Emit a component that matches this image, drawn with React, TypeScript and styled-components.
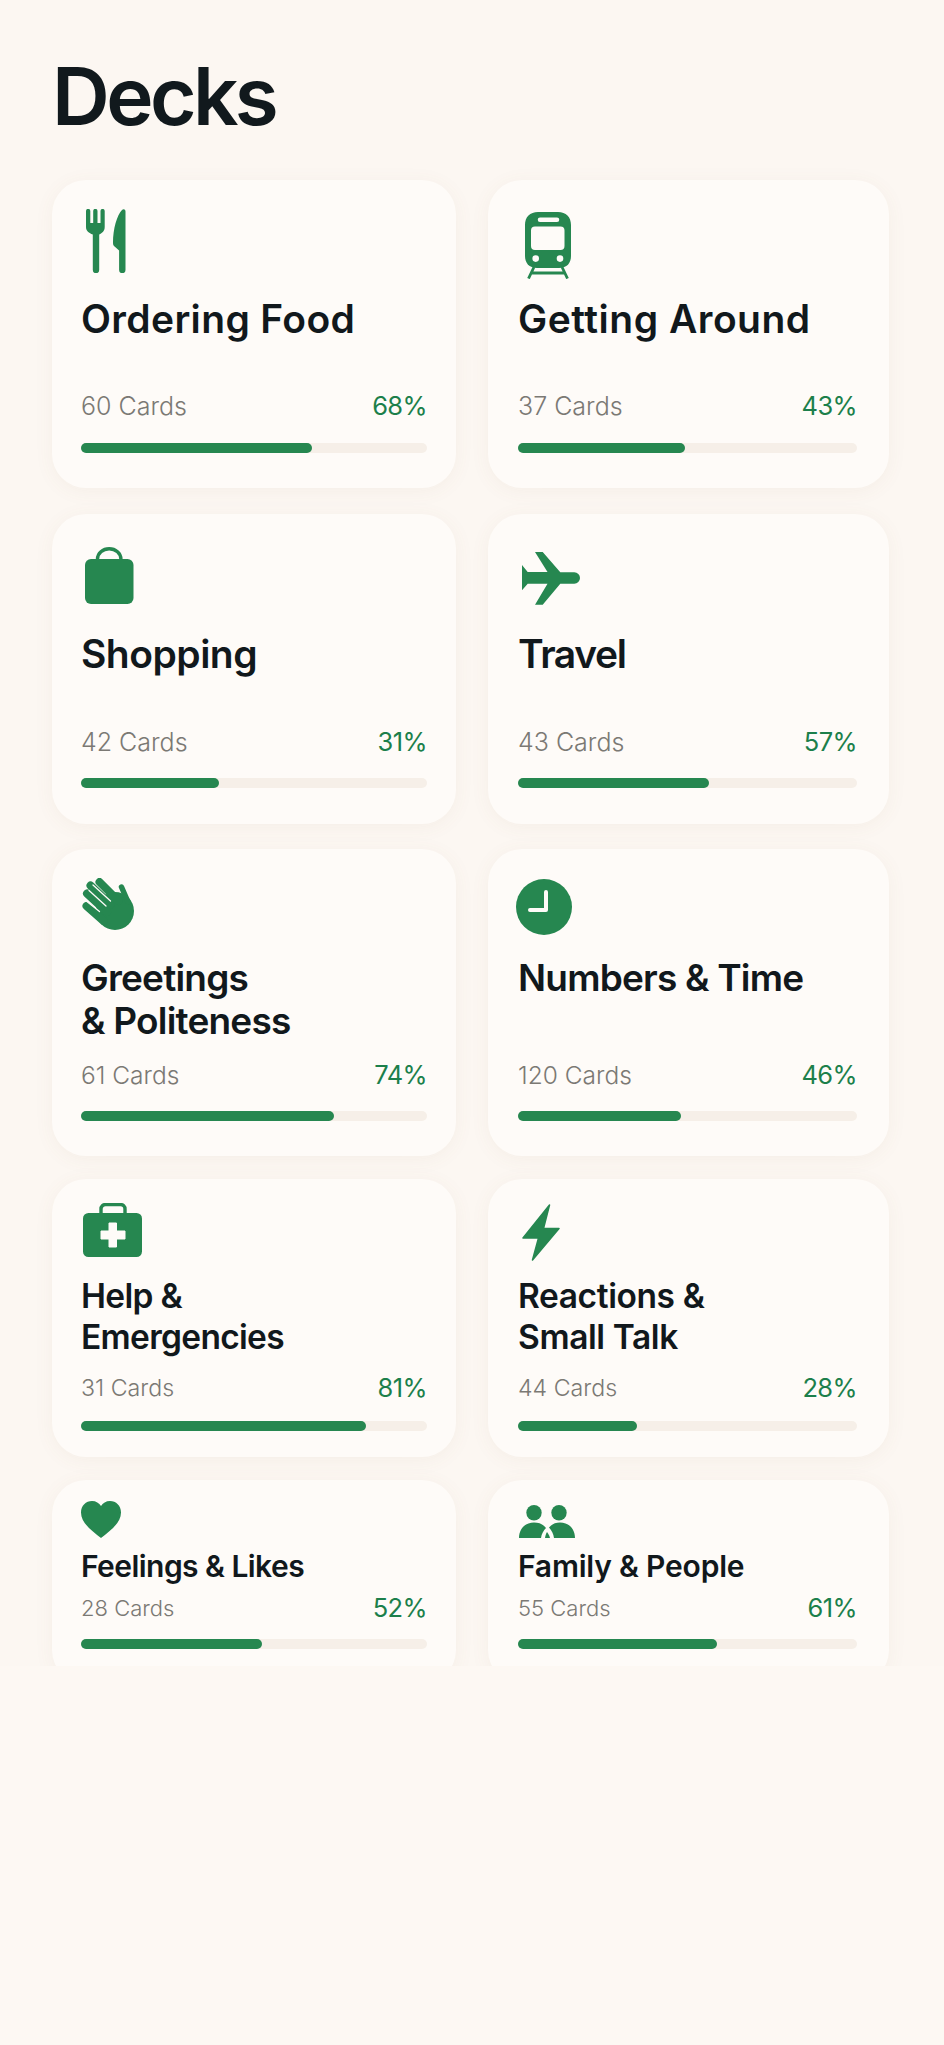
import React, { FunctionComponent, ReactNode } from "react";
import styled, { createGlobalStyle } from "styled-components";

const GREEN = "#268750";
const CARD = "#fefbf8";

const ForkKnife = () => (
    <svg width="40" height="64" viewBox="0 0 40 64" fill={GREEN}>
        <path d="M0 2a2.15 2.15 0 0 1 4.3 0V14h2.9V2a2.15 2.15 0 0 1 4.3 0V14h3V2a2.1 2.1 0 0 1 4.2 0V18c0 4-2.5 6-5.5 7.5V61a3.2 3.2 0 0 1-6.4 0V25.5C3 24 0 22 0 18z" />
        <path d="M39.5 2.5V61a3.2 3.2 0 0 1-6.4 0V41.5L28 37c-.8-1-1-2-1-3.5C27 20 31 6 36 1c1.5-1.3 3.5-.5 3.5 1.5z" />
    </svg>
);

const Train = () => (
    <svg width="46" height="67" viewBox="0 0 46 67">
        <path
            fill={GREEN}
            fillRule="evenodd"
            d="M13 0h20c8 0 13 5 13 13v31c0 7-4 12-12 12H12C4 56 0 51 0 44V13C0 5 5 0 13 0zM15 5.5a2.2 2.2 0 0 0 0 4.5h17a2.2 2.2 0 0 0 0-4.5zM10 14.5a4 4 0 0 0-4 4V34a4 4 0 0 0 4 4h25.5a4 4 0 0 0 4-4V18.5a4 4 0 0 0-4-4zM10.7 43.3a3.3 3.3 0 1 0 0 6.6 3.3 3.3 0 0 0 0-6.6zM35 43.3a3.3 3.3 0 1 0 0 6.6 3.3 3.3 0 0 0 0-6.6z"
        />
        <path
            stroke={GREEN}
            strokeWidth="2.8"
            fill="none"
            d="M9 55L3.5 66.5M37 55L42.5 66.5M6 61h34"
        />
    </svg>
);

const Bag = () => (
    <svg width="49" height="57" viewBox="0 0 49 57" fill={GREEN}>
        <path d="M12.5 14v-2a11.7 10.3 0 0 1 23.4 0v2" fill="none" stroke={GREEN} strokeWidth="3.4" />
        <rect x="0" y="12" width="48.5" height="45" rx="6" />
    </svg>
);

const Plane = () => (
    <svg width="58" height="53" viewBox="0 0 58 53" fill={GREEN}>
        <path d="M0 13l5.7 7H25.5L13 0h7.7l17.6 20.3h14a5.7 5.7 0 0 1 0 11.4h-14L20.7 52.7H13l12.5-21H5.7L0 38.3z" />
    </svg>
);

const Hand = () => (
    <svg width="53" height="53" viewBox="0 0 53 53" fill={GREEN} stroke={GREEN} strokeLinecap="round">
        <circle cx="33" cy="33" r="19" stroke="none" />
        <path d="M39.5 9L46 24" strokeWidth="5.5" />
        <path d="M17.5 4l19 19M8.5 7.5l20 19M5 15.5l20 18.5M4.5 28l17 15" strokeWidth="8" />
        <path d="M11 7l17.5 16M7 12.5l17 15.5M3 22l14.5 11.5" stroke={CARD} strokeWidth="1.3" />
    </svg>
);

const Clock = () => (
    <svg width="56" height="56" viewBox="0 0 56 56">
        <circle cx="28" cy="28" r="28" fill={GREEN} />
        <path d="M30 13v18H14" fill="none" stroke={CARD} strokeWidth="4" strokeLinecap="round" strokeLinejoin="round" />
    </svg>
);

const Kit = () => (
    <svg width="60" height="54" viewBox="0 0 60 54">
        <path d="M18 12V6a4.5 4.5 0 0 1 4.5-4.5h15A4.5 4.5 0 0 1 42 6v6" fill="none" stroke={GREEN} strokeWidth="3.4" />
        <rect y="10" width="59" height="44" rx="5.5" fill={GREEN} />
        <path d="M26 20h7.5v8H42v8h-8.5v8H26v-8h-8v-8h8z" fill={CARD} stroke={CARD} strokeLinejoin="round" />
    </svg>
);

const Bolt = () => (
    <svg width="38" height="57" viewBox="0 0 38 57" fill={GREEN} stroke={GREEN} strokeLinejoin="round" strokeWidth="1.5">
        <path d="M27.5 1L1 34h15.5L10.500 56 37 24.500H21.500z" />
    </svg>
);

const Heart = () => (
    <svg width="40" height="37" viewBox="0 0 40 37" fill={GREEN}>
        <path d="M20 37C12 30.5 0 22.5 0 11.5 0 4.5 5 0 11 0c4 0 7.2 2 9 5 1.8-3 5-5 9-5 6 0 11 4.5 11 11.5C40 22.5 28 30.5 20 37z" />
    </svg>
);

const People = () => (
    <svg width="56" height="33" viewBox="0 0 56 33" fill={GREEN}>
        <circle cx="15" cy="7.7" r="7.7" />
        <circle cx="40" cy="7.7" r="7.7" />
        <path d="M0 33c0-9 6-15.5 15-15.5 5 0 9 1.5 12 5.500-2.500 2.500-4.500 6-5 10z" />
        <path d="M56 33c0-9-6-15.500-15-15.500-4.500 0-8 1.500-11 5 2.500 2.500 4.500 6.500 5 10.500z" />
        <path d="M26 33c.3-2.500 1-4.500 2-6 1.200 1.500 2.500 3.500 3 6z" />
    </svg>
);

type Deck = {
    title: ReactNode;
    cards: number;
    percent: number;
    fill: number;
    icon: ReactNode;
    iconLeft: number;
    iconTop: number;
    tracking?: number;
};

type DeckRowConfig = {
    height: number;
    gapAfter: number;
    slot: number;
    titleSize: number;
    titleLine: number;
    tracking: number;
    countSize: number;
    metaGap: number;
    bottom: number;
    decks: Array<Deck>;
};

const rows: Array<DeckRowConfig> = [
    {
        height: 308, gapAfter: 26, slot: 117, titleSize: 39, titleLine: 44, tracking: 0.35, countSize: 25, metaGap: 22, bottom: 35,
        decks: [
            { title: "Ordering Food", cards: 60, percent: 68, fill: 66.8, icon: <ForkKnife />, iconLeft: 5, iconTop: 29 },
            { title: "Getting Around", cards: 37, percent: 43, fill: 49.2, icon: <Train />, iconLeft: 7, iconTop: 32, tracking: 0.5 },
        ],
    },
    {
        height: 310, gapAfter: 25, slot: 118, titleSize: 39, titleLine: 44, tracking: -0.5, countSize: 25, metaGap: 21, bottom: 36,
        decks: [
            { title: "Shopping", cards: 42, percent: 31, fill: 39.8, icon: <Bag />, iconLeft: 4, iconTop: 33 },
            { title: "Travel", cards: 43, percent: 57, fill: 56.3, icon: <Plane />, iconLeft: 4, iconTop: 38, tracking: -1.4 },
        ],
    },
    {
        height: 307, gapAfter: 23, slot: 107, titleSize: 37, titleLine: 43, tracking: -0.8, countSize: 24.5, metaGap: 21, bottom: 35,
        decks: [
            { title: <>Greetings<br />& Politeness</>, cards: 61, percent: 74, fill: 73, icon: <Hand />, iconLeft: 1, iconTop: 29 },
            { title: "Numbers & Time", cards: 120, percent: 46, fill: 48, icon: <Clock />, iconLeft: -2, iconTop: 30 },
        ],
    },
    {
        height: 278, gapAfter: 23, slot: 97, titleSize: 33.5, titleLine: 41, tracking: -0.7, countSize: 23.2, metaGap: 18, bottom: 26,
        decks: [
            { title: <>Help &<br />Emergencies</>, cards: 31, percent: 81, fill: 82.3, icon: <Kit />, iconLeft: 2, iconTop: 24 },
            { title: <>Reactions &<br />Small Talk</>, cards: 44, percent: 28, fill: 35, icon: <Bolt />, iconLeft: 4, iconTop: 25, tracking: -0.4 },
        ],
    },
    {
        height: 204, gapAfter: 0, slot: 68, titleSize: 30, titleLine: 36, tracking: -0.55, countSize: 22, metaGap: 16, bottom: 35,
        decks: [
            { title: "Feelings & Likes", cards: 28, percent: 52, fill: 52.2, icon: <Heart />, iconLeft: 0, iconTop: 21 },
            { title: "Family & People", cards: 55, percent: 61, fill: 58.6, icon: <People />, iconLeft: 1, iconTop: 25, tracking: -0.2 },
        ],
    },
];

const App: FunctionComponent = () => {
    return (
        <Root>
            <GlobalStyle />
            <Viewport>
                <Heading>Decks</Heading>
                {rows.map((row, i) => (
                    <DeckRow key={i} $height={row.height} $gapAfter={row.gapAfter}>
                        {row.decks.map((deck, j) => (
                            <Card key={j} $right={j === 1} $bottom={row.bottom}>
                                <IconSlot
                                    $height={row.slot}
                                    $left={deck.iconLeft}
                                    $top={deck.iconTop}
                                >
                                    {deck.icon}
                                </IconSlot>
                                <Title
                                    $size={row.titleSize}
                                    $line={row.titleLine}
                                    $tracking={deck.tracking ?? row.tracking}
                                >
                                    {deck.title}
                                </Title>
                                <Meta $gap={row.metaGap}>
                                    <Count $size={row.countSize}>
                                        {deck.cards} Cards
                                    </Count>
                                    <Percent>{deck.percent}%</Percent>
                                </Meta>
                                <Track>
                                    <Fill style={{ width: `${deck.fill}%` }} />
                                </Track>
                            </Card>
                        ))}
                    </DeckRow>
                ))}
            </Viewport>
        </Root>
    );
};

const GlobalStyle = createGlobalStyle`
    html, body {
        margin: 0;
        background: #fdf8f3;
    }
    * {
        box-sizing: border-box;
    }
`;

const Root = styled.div`
    width: 944px;
    height: 2045px;
    font-family: Inter, "Liberation Sans", sans-serif;
    background: #fdf8f3;
`;

const Viewport = styled.div`
    height: 1666px;
    padding: 0 0 0 52px;
    overflow: hidden;
    background: #fcf7f2;
`;

const Heading = styled.h1`
    margin: 0;
    height: 180px;
    padding-top: 48px;
    font-size: 80px;
    line-height: 96px;
    font-weight: 600;
    letter-spacing: -3.6px;
    color: #11191d;
`;

const DeckRow = styled.div<{ $height: number; $gapAfter: number }>`
    display: grid;
    grid-template-columns: 404px 401px;
    column-gap: 32px;
    height: ${(p) => p.$height}px;
    margin-bottom: ${(p) => p.$gapAfter}px;
`;

const Card = styled.div<{ $right: boolean; $bottom: number }>`
    display: flex;
    flex-direction: column;
    padding: 0 ${(p) => (p.$right ? 32 : 29)}px ${(p) => p.$bottom}px
        ${(p) => (p.$right ? 30 : 29)}px;
    background: ${CARD};
    border-radius: 34px;
    box-shadow: 0 3px 20px rgba(130, 95, 60, 0.06);
`;

const IconSlot = styled.div<{ $height: number; $left: number; $top: number }>`
    height: ${(p) => p.$height}px;
    flex: none;
    svg {
        display: block;
        margin: ${(p) => p.$top}px 0 0 ${(p) => p.$left}px;
    }
`;

const Title = styled.div<{ $size: number; $line: number; $tracking: number }>`
    font-size: ${(p) => p.$size}px;
    line-height: ${(p) => p.$line}px;
    font-weight: 560;
    letter-spacing: ${(p) => p.$tracking}px;
    color: #11181c;
`;

const Meta = styled.div<{ $gap: number }>`
    display: flex;
    justify-content: space-between;
    align-items: center;
    margin-top: auto;
    margin-bottom: ${(p) => p.$gap}px;
    line-height: 30px;
`;

const Count = styled.span<{ $size: number }>`
    font-size: ${(p) => p.$size}px;
    font-weight: 300;
    color: #7b7974;
`;

const Percent = styled.span`
    font-size: 25.5px;
    font-weight: 400;
    letter-spacing: -0.6px;
    color: #1c7f4b;
`;

const Track = styled.div`
    height: 10px;
    flex: none;
    border-radius: 5px;
    background: #f6efe8;
`;

const Fill = styled.div`
    height: 100%;
    border-radius: 5px;
    background: ${GREEN};
`;

export default App;
